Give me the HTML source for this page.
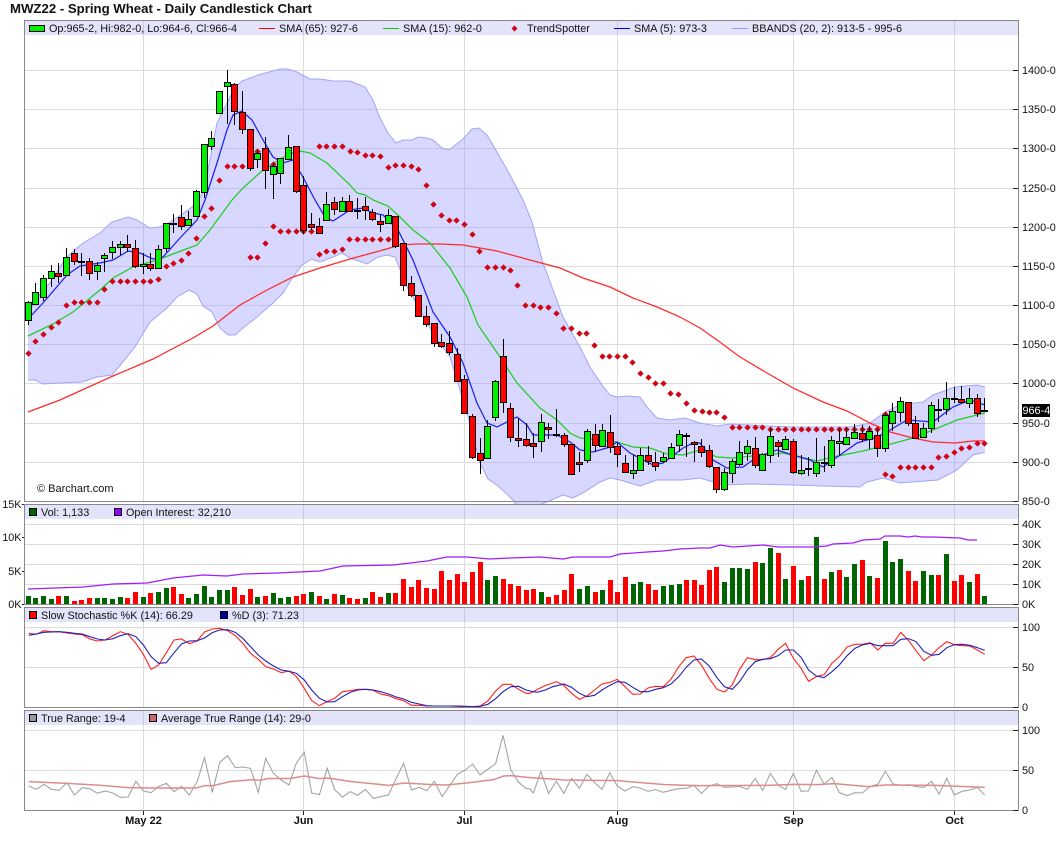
<!DOCTYPE html>
<html><head><meta charset="utf-8"><title>MWZ22 - Spring Wheat - Daily Candlestick Chart</title>
<style>
html,body{margin:0;padding:0;background:#fff}
svg{display:block}
text{font-family:"Liberation Sans",Arial,sans-serif;font-size:10.85px;fill:#111}
.z{fill:none;vector-effect:non-scaling-stroke;stroke-width:1.1}
</style></head><body>
<svg xmlns="http://www.w3.org/2000/svg" width="1060" height="851" viewBox="0 0 1060 851">
<defs><marker id="d" markerUnits="userSpaceOnUse" markerWidth="8" markerHeight="8" refX="4" refY="4" overflow="visible"><path d="M4 1.1L6.9 4 4 6.9 1.1 4z" fill="#d80012" stroke="#a00" stroke-width=".4"/></marker></defs>
<rect width="1060" height="851" fill="#fff"/>
<text x="10" y="13" style="font-size:13.2px;font-weight:bold">MWZ22 - Spring Wheat - Daily Candlestick Chart</text>

<!-- grids -->
<g stroke="#dcdcdc" fill="none" shape-rendering="crispEdges">
<path d="M25 70.5H1013M25 109.5H1013M25 148.5H1013M25 188.5H1013M25 227.5H1013M25 266.5H1013M25 305.5H1013M25 344.5H1013M25 383.5H1013M25 423.5H1013M25 462.5H1013"/>
<path d="M143.5 21V501M303.5 21V501M464.5 21V501M617.5 21V501M793.5 21V501M954.5 21V501"/>
</g>

<!-- bollinger -->
<polygon fill="#9999ff" fill-opacity=".39" points="28,313 35,302 43,290 50,283 58,270 66,258 77,248 83,243 100,233 112,222 128,217 137,220 150,228 160,227 170,222 181,215 188,210 197,203 203,192 208,170 217,123 227,103 235,87 242,81 258,75 280,69 288,69 297,72 310,79 320,79 333,81 350,81 365,87 373,100 380,118 388,133 396,143 403,140 412,140 418,137 427,138 433,140 442,148 449,150 463,139 472,129 479,128 487,135 497,152 509,173 523,200 532,222 543,263 552,287 563,317 580,347 590,367 602,385 610,395 617,397 627,396 640,397 647,407 657,418 670,420 685,418 700,423 717,426 730,424 767,426 793,427 833,427 850,427 870,423 885,412 900,405 923,402 933,395 947,390 954,387 977,385 985,387 985,452 973,455 957,470 938,480 900,483 883,478 867,482 860,487 823,486 793,485 750,484 723,485 700,478 683,480 657,480 640,486 620,480 610,478 600,482 583,493 573,498 563,495 542,504 520,510 513,500 497,485 488,479 480,463 467,413 450,357 434,335 407,287 395,257 387,255 378,257 367,264 350,258 342,253 333,257 320,262 312,259 302,265 293,277 283,293 273,303 257,317 243,328 235,335 228,335 220,328 212,312 203,306 197,294 189,290 177,297 167,308 150,322 135,347 122,363 112,375 97,377 82,382 60,383 43,384 35,380 28,380"/>
<g fill="none" stroke="#a4a4f8" stroke-width="1">
<polyline points="28,313 35,302 43,290 50,283 58,270 66,258 77,248 83,243 100,233 112,222 128,217 137,220 150,228 160,227 170,222 181,215 188,210 197,203 203,192 208,170 217,123 227,103 235,87 242,81 258,75 280,69 288,69 297,72 310,79 320,79 333,81 350,81 365,87 373,100 380,118 388,133 396,143 403,140 412,140 418,137 427,138 433,140 442,148 449,150 463,139 472,129 479,128 487,135 497,152 509,173 523,200 532,222 543,263 552,287 563,317 580,347 590,367 602,385 610,395 617,397 627,396 640,397 647,407 657,418 670,420 685,418 700,423 717,426 730,424 767,426 793,427 833,427 850,427 870,423 885,412 900,405 923,402 933,395 947,390 954,387 977,385 985,387"/>
<polyline points="28,380 35,380 43,384 60,383 82,382 97,377 112,375 122,363 135,347 150,322 167,308 177,297 189,290 197,294 203,306 212,312 220,328 228,335 235,335 243,328 257,317 273,303 283,293 293,277 302,265 312,259 320,262 333,257 342,253 350,258 367,264 378,257 387,255 395,257 407,287 434,335 450,357 467,413 480,463 488,479 497,485 513,500 520,510 542,504 563,495 573,498 583,493 600,482 610,478 620,480 640,486 657,480 683,480 700,478 723,485 750,484 793,485 823,486 860,487 867,482 883,478 900,483 938,480 957,470 973,455 985,452"/>
</g>

<!-- moving averages -->
<polyline fill="none" stroke="#ff2a2a" stroke-width="1.25" points="28,412 60,400 82,390 113,376 153,359 193,338 213,326 240,305 267,290 293,277 320,268 350,259 383,250 400,245 417,244 440,244 463,245 497,251 530,260 560,268 583,278 610,287 633,298 657,307 680,317 700,328 717,340 740,357 767,373 793,388 823,402 847,411 870,423 890,432 913,438 933,442 955,443 973,441 984,441"/>
<polyline fill="none" stroke="#22cc22" stroke-width="1.25" points="28,336 53,324 73,312 100,290 113,278 133,267 157,260 173,254 197,245 210,230 232,200 243,188 263,170 287,155 300,151 310,153 327,163 350,185 357,193 365,195 373,200 388,206 400,217 413,230 430,243 450,268 467,297 478,325 487,338 500,357 517,383 540,408 557,420 570,433 580,438 617,442 633,447 650,448 667,454 683,455 700,450 717,457 733,458 783,453 800,457 817,461 833,457 863,451 887,445 913,438 933,430 957,420 985,413"/>
<polyline fill="none" stroke="#2222ee" stroke-width="1.25" points="28,319 43,303 67,275 80,266 100,263 113,260 128,251 140,253 153,259 163,257 180,238 197,220 205,200 217,163 227,130 233,115 242,111 252,120 263,140 273,157 283,163 293,160 303,177 315,200 325,217 333,221 350,210 363,208 373,213 383,215 398,230 413,260 433,312 450,337 463,363 477,403 487,423 497,427 517,417 527,425 533,435 557,435 570,442 580,450 593,452 610,447 617,442 630,453 653,465 663,463 683,448 693,443 700,443 713,460 727,468 743,467 757,457 777,450 793,455 810,460 823,467 840,455 857,443 877,437 890,430 907,420 933,422 953,407 970,400 985,405"/>

<!-- trendspotter -->
<polyline fill="none" stroke="none" marker-start="url(#d)" marker-mid="url(#d)" marker-end="url(#d)" points="28.5,353.5 35.5,341.5 43.5,334.5 51.5,327.5 58.5,322.5 66.5,305.5 74.5,302.5 81.5,302.5 89.5,302.5 97.5,302.5 104.5,289.5 112.5,281.5 120.5,281.5 127.5,281.5 135.5,281.5 143.5,281.5 150.5,281.5 158.5,279.5 166.5,266.5 173.5,263.5 181.5,260.5 188.5,253.5 196.5,238.5 204.5,216.5 211.5,208.5 219.5,180.5 227.5,166.5 234.5,166.5 242.5,166.5 250.5,257.5 257.5,257.5 265.5,243.5 273.5,226.5 280.5,231.5 288.5,231.5 296.5,231.5 303.5,231.5 311.5,231.5 319.5,254.5 326.5,251.5 334.5,251.5 342.5,249.5 349.5,239.5 357.5,239.5 365.5,239.5 372.5,239.5 380.5,239.5 388.5,239.5"/>
<polyline fill="none" stroke="none" marker-start="url(#d)" marker-mid="url(#d)" marker-end="url(#d)" points="257.5,151.5 273.5,164.5 319.5,146.5 326.5,146.5 334.5,146.5 342.5,146.5 350.5,151.5 357.5,152.5 365.5,155.5 372.5,155.5 380.5,156.5 388.5,167.5 395.5,165.5 403.5,165.5 411.5,166.5 418.5,169.5 426.5,185.5 433.5,204.5 441.5,215.5 449.5,220.5 456.5,220.5 464.5,224.5 472.5,234.5 479.5,251.5 487.5,267.5 495.5,267.5 503.5,267.5 510.5,270.5 517.5,285.5 525.5,305.5 533.5,305.5 540.5,307.5 548.5,307.5 556.5,313.5 563.5,328.5 571.5,328.5 579.5,333.5 586.5,333.5 594.5,345.5 602.5,356.5 609.5,356.5 617.5,356.5 625.5,356.5 632.5,362.5 640.5,373.5 648.5,377.5 655.5,383.5 663.5,383.5 670.5,393.5 678.5,394.5 686.5,403.5 694.5,410.5 702.5,411.5 709.5,412.5 716.5,412.5 724.5,417.5 732.5,427.5 739.5,427.5 747.5,427.5 755.5,427.5 762.5,427.5 770.5,429.5 778.5,429.5 785.5,429.5 793.5,429.5 801.5,429.5 808.5,429.5 816.5,429.5 824.5,429.5 831.5,429.5 839.5,429.5 846.5,429.5 854.5,429.5 862.5,429.5 869.5,429.5 877.5,429.5 885.5,414.5"/>
<polyline fill="none" stroke="none" marker-start="url(#d)" marker-mid="url(#d)" marker-end="url(#d)" points="885.5,474.5 892.5,476.5 900.5,467.5 908.5,467.5 915.5,467.5 923.5,467.5 931.5,467.5 938.5,457.5 946.5,456.5 954.5,452.5 961.5,448.5 969.5,447.5 977.5,443.5 984.5,443.5"/>

<!-- wicks -->
<path fill="none" stroke="#000" shape-rendering="crispEdges" d="M28.5 301V325M35.5 283V304M43.5 275V301M51.5 265V287M58.5 263V283M66.5 248V275M74.5 249V265M81.5 253V276M89.5 258V280M97.5 262V280M104.5 253V272M112.5 241V259M120.5 241V255M127.5 235V252M135.5 240V268M143.5 253V274M150.5 253V271M158.5 245V268M166.5 223V252M173.5 214V233M181.5 205V230M188.5 211V225M196.5 190V216M204.5 144V198M211.5 131V150M219.5 91V113M227.5 70V124M234.5 83V125M242.5 91V134M250.5 129V171M257.5 150V168M265.5 137V189M273.5 163V199M280.5 158V184M288.5 135V159M296.5 146V193M303.5 176V234M311.5 213V230M319.5 218V233M326.5 192V220M334.5 197V215M342.5 197V212M349.5 195V212M357.5 198V219M365.5 197V220M372.5 209V221M380.5 215V232M388.5 209V223M395.5 216V248M403.5 243V291M411.5 276V297M418.5 295V317M426.5 306V327M434.5 323V347M441.5 334V348M449.5 331V355M457.5 348V382M464.5 375V413M472.5 414V459M480.5 438V474M487.5 420V459M495.5 380V421M503.5 339V413M510.5 403V442M518.5 418V447M526.5 423V447M533.5 433V458M541.5 414V452M548.5 423V439M556.5 409V437M564.5 433V447M571.5 444V475M579.5 452V472M587.5 429V463M595.5 424V452M602.5 424V446M610.5 415V453M617.5 443V467M625.5 455V473M633.5 455V479M640.5 448V470M648.5 446V465M655.5 452V471M663.5 453V463M671.5 443V458M679.5 430V452M686.5 433V457M694.5 441V462M701.5 439V457M709.5 445V468M716.5 467V493M724.5 468V491M732.5 459V483M739.5 441V466M747.5 440V461M755.5 437V468M762.5 453V470M770.5 428V463M778.5 440V457M785.5 436V449M793.5 439V474M801.5 455V475M808.5 457V476M816.5 438V477M824.5 446V472M831.5 436V468M839.5 429V455M846.5 428V445M854.5 424V438M862.5 425V442M869.5 426V449M877.5 428V457M885.5 413V452M892.5 403V431M900.5 397V422M908.5 402V426M915.5 416V439M923.5 423V437M931.5 402V433M938.5 399V422M946.5 382V415M954.5 387V403M961.5 386V403M969.5 388V408M977.5 394V417M984.5 398V411"/>

<!-- up candles -->
<path fill="#00ee00" stroke="#000" shape-rendering="crispEdges" d="M25.5 302.5h6v18h-6zM32.5 292.5h6v12h-6zM40.5 278.5h6v19h-6zM48.5 271.5h6v7h-6zM63.5 257.5h6v18h-6zM94.5 265.5h6v6h-6zM101.5 255.5h6v3h-6zM109.5 247.5h6v5h-6zM117.5 244.5h6v3h-6zM140.5 264.5h6v2h-6zM155.5 249.5h6v19h-6zM163.5 223.5h6v25h-6zM185.5 219.5h6v6h-6zM193.5 191.5h6v25h-6zM201.5 144.5h6v48h-6zM208.5 138.5h6v8h-6zM216.5 91.5h6v22h-6zM224.5 82.5h6v4h-6zM254.5 153.5h6v6h-6zM270.5 166.5h6v8h-6zM277.5 158.5h6v15h-6zM285.5 147.5h6v12h-6zM323.5 204.5h6v16h-6zM339.5 201.5h6v10h-6zM385.5 215.5h6v8h-6zM484.5 426.5h6v32h-6zM492.5 381.5h6v36h-6zM538.5 422.5h6v19h-6zM584.5 431.5h6v29h-6zM599.5 430.5h6v16h-6zM630.5 470.5h6v3h-6zM637.5 455.5h6v15h-6zM660.5 457.5h6v4h-6zM668.5 447.5h6v11h-6zM676.5 434.5h6v11h-6zM721.5 472.5h6v17h-6zM729.5 461.5h6v12h-6zM736.5 452.5h6v12h-6zM744.5 446.5h6v7h-6zM759.5 454.5h6v16h-6zM767.5 436.5h6v19h-6zM782.5 439.5h6v10h-6zM798.5 470.5h6v3h-6zM813.5 462.5h6v11h-6zM828.5 440.5h6v25h-6zM836.5 441.5h6v2h-6zM843.5 437.5h6v7h-6zM851.5 432.5h6v6h-6zM866.5 431.5h6v8h-6zM882.5 415.5h6v33h-6zM889.5 411.5h6v12h-6zM897.5 401.5h6v11h-6zM920.5 428.5h6v9h-6zM928.5 405.5h6v23h-6zM943.5 398.5h6v11h-6zM966.5 398.5h6v5h-6z"/>
<!-- down candles -->
<path fill="#ff0000" stroke="#000" shape-rendering="crispEdges" d="M55.5 273.5h6v3h-6zM71.5 253.5h6v8h-6zM86.5 261.5h6v12h-6zM124.5 244.5h6v3h-6zM132.5 248.5h6v18h-6zM147.5 264.5h6v4h-6zM178.5 217.5h6v9h-6zM231.5 84.5h6v27h-6zM239.5 112.5h6v17h-6zM247.5 129.5h6v39h-6zM262.5 148.5h6v22h-6zM293.5 146.5h6v45h-6zM300.5 185.5h6v45h-6zM308.5 224.5h6v3h-6zM316.5 226.5h6v7h-6zM331.5 202.5h6v7h-6zM346.5 201.5h6v10h-6zM362.5 206.5h6v4h-6zM369.5 212.5h6v7h-6zM377.5 221.5h6v3h-6zM392.5 216.5h6v30h-6zM400.5 243.5h6v42h-6zM408.5 283.5h6v12h-6zM415.5 295.5h6v21h-6zM423.5 316.5h6v8h-6zM431.5 323.5h6v20h-6zM438.5 342.5h6v4h-6zM446.5 343.5h6v9h-6zM454.5 354.5h6v27h-6zM461.5 379.5h6v34h-6zM469.5 416.5h6v41h-6zM477.5 453.5h6v7h-6zM500.5 356.5h6v46h-6zM507.5 408.5h6v29h-6zM515.5 438.5h6v2h-6zM523.5 439.5h6v6h-6zM530.5 443.5h6v3h-6zM545.5 427.5h6v2h-6zM561.5 435.5h6v9h-6zM568.5 444.5h6v30h-6zM576.5 462.5h6v2h-6zM592.5 434.5h6v11h-6zM607.5 432.5h6v15h-6zM614.5 446.5h6v8h-6zM622.5 463.5h6v9h-6zM645.5 455.5h6v6h-6zM652.5 462.5h6v4h-6zM691.5 442.5h6v2h-6zM698.5 446.5h6v6h-6zM706.5 450.5h6v16h-6zM713.5 467.5h6v22h-6zM752.5 448.5h6v17h-6zM775.5 442.5h6v4h-6zM790.5 441.5h6v31h-6zM859.5 433.5h6v6h-6zM874.5 435.5h6v13h-6zM905.5 402.5h6v21h-6zM912.5 423.5h6v15h-6zM958.5 399.5h6v3h-6zM974.5 398.5h6v15h-6z"/>
<!-- dojis -->
<path fill="#000" shape-rendering="crispEdges" d="M78 261h7v2h-7zM170 223h7v2h-7zM354 210h7v2h-7zM553 434h7v2h-7zM683 435h7v2h-7zM805 468h7v2h-7zM821 462h7v2h-7zM935 409h7v2h-7zM951 398h7v2h-7zM981 410h7v2h-7z"/>

<!-- volume panel -->
<rect x="25" y="505" width="993" height="99" fill="#fff"/>
<g stroke="#dcdcdc" fill="none" shape-rendering="crispEdges">
<path d="M25 524.5H1013M25 544.5H1013M25 564.5H1013M25 584.5H1013M143.5 505V604M303.5 505V604M464.5 505V604M617.5 505V604M793.5 505V604M954.5 505V604"/>
</g>
<path fill="none" stroke="#006400" stroke-width="5" shape-rendering="crispEdges" d="M28.5 596V604M35.5 598V604M43.5 596V604M51.5 599V604M66.5 596V604M97.5 598V604M104.5 598V604M112.5 599V604M120.5 597V604M143.5 597V604M158.5 592V604M166.5 588V604M188.5 598V604M196.5 594V604M204.5 586V604M211.5 597V604M219.5 590V604M227.5 590V604M257.5 597V604M273.5 593V604M280.5 598V604M288.5 597V604M311.5 592V604M326.5 599V604M342.5 595V604M365.5 598V604M388.5 593V604M487.5 580V604M495.5 576V604M541.5 592V604M579.5 589V604M587.5 586V604M602.5 590V604M633.5 584V604M640.5 582V604M663.5 586V604M671.5 585V604M679.5 584V604M724.5 582V604M732.5 568V604M739.5 568V604M747.5 569V604M762.5 563V604M770.5 548V604M785.5 579V604M801.5 580V604M816.5 537V604M831.5 572V604M846.5 577V604M854.5 564V604M869.5 576V604M885.5 541V604M892.5 562V604M900.5 559V604M923.5 571V604M931.5 575V604M946.5 554V604M969.5 582V604M984.5 596V604"/>
<path fill="none" stroke="#ff0000" stroke-width="5" shape-rendering="crispEdges" d="M58.5 596V604M74.5 601V604M81.5 600V604M89.5 598V604M127.5 598V604M135.5 592V604M150.5 593V604M173.5 587V604M181.5 594V604M234.5 587V604M242.5 595V604M250.5 589V604M265.5 596V604M296.5 596V604M303.5 594V604M319.5 596V604M334.5 594V604M349.5 598V604M357.5 599V604M372.5 592V604M380.5 597V604M395.5 593V604M403.5 579V604M411.5 587V604M418.5 580V604M426.5 588V604M434.5 589V604M441.5 571V604M449.5 580V604M457.5 574V604M464.5 582V604M472.5 572V604M480.5 562V604M503.5 579V604M510.5 584V604M518.5 586V604M526.5 590V604M533.5 589V604M548.5 597V604M556.5 595V604M564.5 590V604M571.5 574V604M595.5 592V604M610.5 580V604M617.5 592V604M625.5 577V604M648.5 584V604M655.5 590V604M686.5 580V604M694.5 580V604M701.5 585V604M709.5 570V604M716.5 567V604M755.5 562V604M778.5 553V604M793.5 566V604M808.5 576V604M824.5 579V604M839.5 570V604M862.5 560V604M877.5 578V604M908.5 571V604M915.5 581V604M938.5 575V604M954.5 581V604M961.5 575V604M977.5 574V604"/>
<polyline fill="none" stroke="#9f1cff" stroke-width="1.25" points="28,589 83,587 113,584 147,583 173,578 203,575 227,576 243,574 277,573 320,571 343,566 393,565 427,561 447,557 467,557 490,559 510,558 540,557 563,559 573,557 590,557 610,557 620,554 647,552 663,551 680,549 700,548 710,548 720,545 733,547 763,545 778,547 813,547 827,546 833,544 853,543 863,540 880,539 885,536 900,536 908,537 915,536 922,537 933,537 960,538 968,540 977,540"/>

<!-- stochastic panel lines -->
<rect x="25" y="608" width="993" height="99" fill="#fff"/>
<g stroke="#dcdcdc" fill="none" shape-rendering="crispEdges"><path d="M25 627.5H1013M25 667.5H1013M143.5 608V707M303.5 608V707M464.5 608V707M617.5 608V707M793.5 608V707M954.5 608V707"/></g>
<g transform="translate(0 610) scale(.33807 .33333)">
<polyline class="z" stroke="#ff2020" points="85,70 107,73 130,62 152,65 175,65 198,69 220,72 243,74 266,87 288,93 311,90 334,77 356,65 379,73 402,100 424,133 447,178 469,165 492,128 515,90 537,87 560,101 583,93 605,66 628,57 650,55 673,62 696,77 718,100 741,130 764,148 786,170 809,177 832,188 855,183 877,200 900,235 922,272 945,287 968,274 990,265 1013,245 1036,242 1058,238 1081,238 1104,241 1126,252 1149,257 1172,266 1194,272 1217,286 1240,286 1262,288 1285,288 1308,288 1330,288 1353,289 1376,290 1398,290 1420,288 1443,273 1466,243 1488,223 1511,223 1534,238 1556,250 1568,250"/>
<polyline class="z" stroke="#2020b8" points="85,76 107,72 130,67 152,66 175,65 198,67 220,70 243,72 266,80 288,87 311,90 334,86 356,77 379,71 402,80 424,105 447,140 469,160 492,158 515,128 537,102 560,93 583,92 605,84 628,68 650,60 673,59 696,67 718,85 741,110 764,135 786,153 809,168 832,180 855,184 877,190 900,210 922,240 945,265 968,276 990,275 1013,260 1036,247 1058,240 1081,238 1104,240 1126,245 1149,252 1172,261 1194,267 1217,277 1240,282 1262,287 1285,288 1308,288 1330,288 1353,288 1376,289 1398,290 1420,289 1443,283 1466,266 1488,245 1511,230 1534,229 1556,240 1568,243"/>
</g>
<g transform="translate(530 610) scale(.33807 .33333)">
<polyline class="z" stroke="#ff2020" points="0,250 22,238 45,227 78,215 100,226 123,250 146,268 168,258 191,240 213,222 236,217 258,208 281,230 304,253 326,252 349,234 372,229 394,230 417,208 440,170 462,143 485,138 507,165 530,205 553,238 575,246 598,225 620,178 643,143 666,149 688,149 711,143 734,118 756,100 779,145 802,175 824,214 847,200 870,194 893,160 915,140 938,111 961,103 983,103 1006,98 1029,120 1051,100 1074,100 1097,67 1120,92 1142,122 1165,152 1188,135 1210,113 1233,95 1255,104 1278,107 1301,108 1323,120 1345,133"/>
<polyline class="z" stroke="#2020b8" points="0,243 22,247 45,240 68,230 100,222 123,232 146,250 168,260 191,256 213,240 236,226 258,215 281,217 304,232 326,245 349,245 372,238 394,233 417,222 440,200 462,172 485,150 507,147 530,168 553,203 575,230 598,238 620,215 643,180 666,155 688,148 711,146 734,137 756,120 779,120 802,142 824,180 847,198 870,203 893,185 915,165 938,137 961,115 983,105 1006,100 1029,107 1051,107 1074,107 1097,88 1120,86 1142,95 1165,124 1188,136 1210,133 1233,113 1255,104 1278,103 1301,106 1323,113 1345,121"/>
</g>

<!-- true range panel -->
<rect x="25" y="711" width="993" height="99" fill="#fff"/>
<g stroke="#dcdcdc" fill="none" shape-rendering="crispEdges"><path d="M25 730.5H1013M25 770.5H1013M143.5 711V810M303.5 711V810M464.5 711V810M617.5 711V810M793.5 711V810M954.5 711V810"/></g>
<g transform="translate(0 610) scale(.33807 .33333)">
<polyline class="z" stroke="#a4a4a4" points="85,528 107,538 130,523 152,538 175,541 198,518 220,555 243,533 266,536 288,550 311,543 334,549 356,562 379,561 402,514 424,543 447,548 469,529 492,520 515,545 537,529 560,555 583,515 605,443 628,547 650,457 673,437 696,473 718,471 741,475 764,547 786,445 809,490 832,510 855,525 877,458 900,427 922,549 945,554 968,475 990,539 1013,561 1036,545 1058,556 1081,538 1104,565 1126,560 1149,555 1172,505 1194,460 1217,540 1240,532 1262,542 1285,514 1308,560 1330,527 1353,493 1376,480 1398,462 1420,495 1443,478 1466,461 1488,376 1511,480 1534,517 1556,535 1568,537"/>
<polyline class="z" stroke="#dc8c8c" style="stroke-width:1.5" points="85,515 200,520 300,526 380,533 460,534 580,534 605,527 630,527 680,515 750,509 770,511 790,506 860,505 900,498 945,506 970,504 1040,515 1150,526 1195,519 1280,524 1320,525 1380,519 1460,509 1490,498 1511,497 1568,503"/>
</g>
<g transform="translate(530 610) scale(.33807 .33333)">
<polyline class="z" stroke="#a4a4a4" points="0,537 10,549 32,485 55,550 78,514 100,550 123,505 146,535 168,493 191,518 213,538 236,488 258,528 281,543 304,530 326,534 349,544 372,539 394,547 417,541 440,536 462,535 485,526 507,550 530,528 553,521 575,532 598,531 620,529 643,538 666,505 688,541 711,490 734,526 756,538 779,490 802,544 824,543 847,481 870,522 893,502 915,548 938,557 961,548 983,549 1006,529 1029,523 1051,484 1074,522 1097,526 1120,524 1142,530 1165,532 1188,514 1210,552 1233,505 1255,555 1278,544 1301,540 1323,532 1345,555"/>
<polyline class="z" stroke="#dc8c8c" style="stroke-width:1.5" points="0,503 80,508 100,510 260,512 400,524 500,527 700,526 780,523 850,524 900,521 1000,530 1050,525 1200,526 1345,532"/>
</g>

<!-- legend bands -->
<g fill="#9999ee" fill-opacity=".27" shape-rendering="crispEdges">
<rect x="25" y="21" width="993" height="14"/><rect x="25" y="505" width="993" height="14"/><rect x="25" y="608" width="993" height="14"/><rect x="25" y="711" width="993" height="14"/>
</g>

<!-- frames -->
<g fill="none" stroke="#888" shape-rendering="crispEdges">
<rect x="24.5" y="20.5" width="994" height="481"/>
<rect x="24.5" y="504.5" width="994" height="100"/>
<rect x="24.5" y="607.5" width="994" height="100"/>
<rect x="24.5" y="710.5" width="994" height="100"/>
</g>

<!-- ticks -->
<path stroke="#222" fill="none" shape-rendering="crispEdges" d="M1013 70.5h5M1013 109.5h5M1013 148.5h5M1013 188.5h5M1013 227.5h5M1013 266.5h5M1013 305.5h5M1013 344.5h5M1013 383.5h5M1013 423.5h5M1013 462.5h5M1013 501.5h5M1013 524.5h5M1013 544.5h5M1013 564.5h5M1013 584.5h5M1013 604.5h5M1013 627.5h5M1013 667.5h5M1013 707.5h5M1013 730.5h5M1013 770.5h5M1013 810.5h5M22 504.5h2M22 537.5h2M22 571.5h2M22 604.5h2M143.5 811v4M303.5 811v4M464.5 811v4M617.5 811v4M793.5 811v4M954.5 811v4"/>

<!-- axis labels -->
<g>
<text x="1022" y="74">1400-0</text><text x="1022" y="113">1350-0</text><text x="1022" y="152">1300-0</text><text x="1022" y="192">1250-0</text><text x="1022" y="231">1200-0</text><text x="1022" y="270">1150-0</text><text x="1022" y="309">1100-0</text><text x="1022" y="348">1050-0</text><text x="1022" y="387">1000-0</text><text x="1022" y="427">950-0</text><text x="1022" y="466">900-0</text><text x="1022" y="505">850-0</text>
<text x="1022" y="528">40K</text><text x="1022" y="548">30K</text><text x="1022" y="568">20K</text><text x="1022" y="588">10K</text><text x="1022" y="608">0K</text>
<text x="1022" y="631">100</text><text x="1022" y="671">50</text><text x="1022" y="711">0</text>
<text x="1022" y="734">100</text><text x="1022" y="774">50</text><text x="1022" y="814">0</text>
<text x="21.5" y="508" text-anchor="end">15K</text><text x="21.5" y="541" text-anchor="end">10K</text><text x="21.5" y="575" text-anchor="end">5K</text><text x="21.5" y="608" text-anchor="end">0K</text>
</g>
<rect x="1022" y="404" width="28" height="13" fill="#000"/>
<text x="1022.5" y="414" style="fill:#fff">966-4</text>

<g text-anchor="middle">
<text x="143.5" y="824" style="font-weight:bold;font-size:11px">May 22</text><text x="303.5" y="824" style="font-weight:bold;font-size:11px">Jun</text><text x="464.5" y="824" style="font-weight:bold;font-size:11px">Jul</text><text x="617.5" y="824" style="font-weight:bold;font-size:11px">Aug</text><text x="793.5" y="824" style="font-weight:bold;font-size:11px">Sep</text><text x="954.5" y="824" style="font-weight:bold;font-size:11px">Oct</text>
</g>

<text x="37" y="492" style="font-size:11px">© Barchart.com</text>

<!-- legends -->
<rect x="29.5" y="25.5" width="15" height="6" fill="#00ee00" stroke="#000" shape-rendering="crispEdges"/>
<text x="49" y="32">Op:965-2, Hi:982-0, Lo:964-6, Cl:966-4</text>
<path d="M259 28.5h16" stroke="#ff0000" shape-rendering="crispEdges"/><text x="279" y="32">SMA (65): 927-6</text>
<path d="M383 28.5h16" stroke="#00cc00" shape-rendering="crispEdges"/><text x="403" y="32">SMA (15): 962-0</text>
<path d="M514.5 25.5l3 3-3 3-3-3z" fill="#d80012"/><text x="527" y="32">TrendSpotter</text>
<path d="M614 28.5h16" stroke="#0000ee" shape-rendering="crispEdges"/><text x="634" y="32">SMA (5): 973-3</text>
<path d="M732 28.5h16" stroke="#9999ff" shape-rendering="crispEdges"/><text x="752" y="32">BBANDS (20, 2): 913-5 - 995-6</text>

<rect x="29.5" y="508.5" width="7" height="7" fill="#006400" stroke="#000" shape-rendering="crispEdges"/><text x="41" y="516">Vol: 1,133</text>
<rect x="114.5" y="508.5" width="7" height="7" fill="#9900ff" stroke="#000" shape-rendering="crispEdges"/><text x="126" y="516">Open Interest: 32,210</text>

<rect x="29.5" y="611.5" width="7" height="7" fill="#ff0000" stroke="#000" shape-rendering="crispEdges"/><text x="41" y="619">Slow Stochastic %K (14): 66.29</text>
<rect x="220.5" y="611.5" width="7" height="7" fill="#000099" stroke="#000" shape-rendering="crispEdges"/><text x="232" y="619">%D (3): 71.23</text>

<rect x="29.5" y="714.5" width="7" height="7" fill="#999" stroke="#000" shape-rendering="crispEdges"/><text x="41" y="722">True Range: 19-4</text>
<rect x="149.5" y="714.5" width="7" height="7" fill="#cc6666" stroke="#000" shape-rendering="crispEdges"/><text x="161" y="722">Average True Range (14): 29-0</text>
</svg>
</body></html>
